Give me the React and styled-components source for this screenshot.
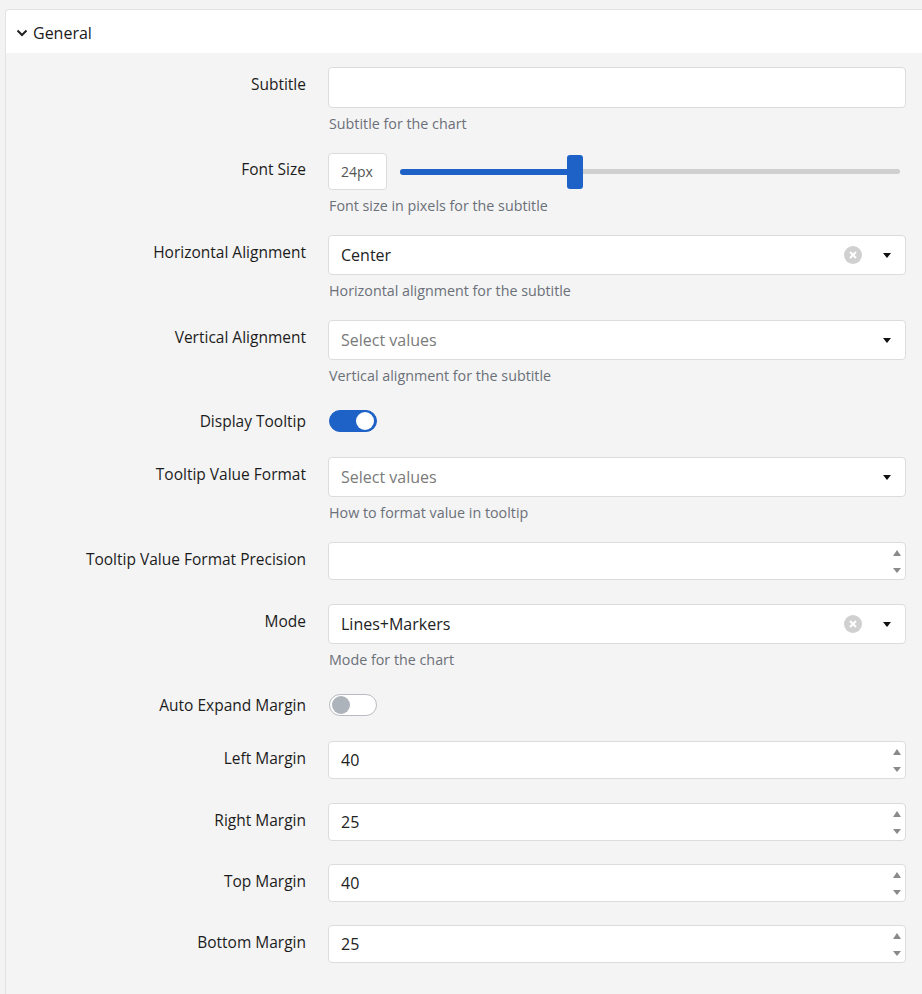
import React from 'react';
import styled, {createGlobalStyle} from 'styled-components';

const Global = createGlobalStyle`
  body {
    margin: 0;
    background: #f3f3f3;
    font-family: "Open Sans", Roboto, Arial, sans-serif;
    color: #222;
  }
`

const Page = styled.div`
  padding: 9px 0 0 5px;
  width: 922px;
  height: 994px;
  box-sizing: border-box;
  overflow: hidden;
`

const Card = styled.div`
  border: 1px solid #e3e3e3;
  border-right: none;
  border-bottom: none;
  border-radius: 4px 0 0 0;
  background: #f4f4f4;
  min-height: 990px;
`

const Header = styled.div`
  display: flex;
  align-items: center;
  gap: 5px;
  height: 43px;
  padding: 3px 0 0 10px;
  box-sizing: border-box;
  background: #fff;
  font-size: 16px;
  color: #1a1a1a;
  border-radius: 4px 0 0 0;
`

const Body = styled.div`
  padding: 14px 16px 0 0;
  display: flex;
  flex-direction: column;
`

const Row = styled.div`
  display: grid;
  grid-template-columns: 300px 1fr;
  column-gap: 22px;
  margin-bottom: ${({ gap }) => gap}px;
`

const Label = styled.div`
  text-align: right;
  font-size: 15.5px;
  line-height: 20px;
  color: #1c1c1c;
  padding-top: ${({ top }) => top ?? 7}px;
`

const Field = styled.div`
  display: flex;
  flex-direction: column;
`

const Help = styled.div`
  font-size: 14.3px;
  line-height: 16px;
  color: #6b7079;
  margin-top: 8px;
  padding-left: 1px;
`

const Box = styled.div`
  position: relative;
  height: ${({ h }) => h || 40}px;
  box-sizing: border-box;
  background: #fff;
  border: 1px solid #dcdcdc;
  border-radius: 4px;
  display: flex;
  align-items: center;
  padding-left: 12px;
  font-size: 16px;
  color: #222;
`

const Placeholder = styled.span`
  color: #7a7a7a;
`

const Spacer = styled.div`
  flex: 1;
`

const Clear = styled.span`
  width: 18px;
  height: 18px;
  flex: none;
  border-radius: 50%;
  background: #d0d0d0;
  display: flex;
  align-items: center;
  justify-content: center;
  margin-right: 21px;
`

const Caret = styled.span`
  width: 0;
  height: 0;
  border-left: 4px solid transparent;
  border-right: 4px solid transparent;
  border-top: 5px solid #111;
  margin-right: 14px;
`

const Spinner = styled.div`
  display: flex;
  flex-direction: column;
  justify-content: space-between;
  height: 100%;
  padding: 7px 4px 6px 0;
  box-sizing: border-box;
`

const Tri = styled.span`
  width: 0;
  height: 0;
  border-left: 4px solid transparent;
  border-right: 4px solid transparent;
  ${({ up }) => up ? 'border-bottom: 6px solid #8a8a8a;' : 'border-top: 5px solid #8a8a8a;'}
`

const SliderRow = styled.div`
  display: flex;
  align-items: center;
  gap: 13px;
`

const SizeBox = styled(Box)`
  width: 59px;
  padding-left: 12px;
  font-size: 14px;
  color: #555;
`

const Track = styled.div`
  position: relative;
  width: 500px;
  height: 5px;
  background: #cfcfcf;
  border-radius: 3px;
`

const Fill = styled.div`
  height: 6px;
  margin-top: -0.5px;
  background: #1f62c7;
  border-radius: 3px;
`

const Thumb = styled.div`
  position: absolute;
  top: -14px;
  width: 16px;
  height: 34px;
  border-radius: 3px;
  background: #1f62c7;
`

const Toggle = styled.div`
  width: 48px;
  height: 22px;
  box-sizing: border-box;
  border-radius: 11px;
  margin: 6px 0 2px 1px;
  display: flex;
  align-items: center;
  padding: 0 2px;
  justify-content: ${({ on }) => on ? 'flex-end' : 'flex-start'};
  background: ${({ on }) => on ? '#1f62c7' : '#fff'};
  border: 1px solid ${({ on }) => on ? '#1f62c7' : '#b8bcc2'};
`

const Knob = styled.span`
  width: 18px;
  height: 18px;
  border-radius: 50%;
  background: ${({ on }) => on ? '#fff' : '#adb3ba'};
`

const Chevron = () => (
  <svg width="12" height="12" viewBox="0 0 12 12">
    <path d="M1.5 3.5 L6 8 L10.5 3.5" fill="none" stroke="#222" strokeWidth="2" />
  </svg>
)

const Select = ({ value, placeholder }) => (
  <Box>
    {value ? <span>{value}</span> : <Placeholder>{placeholder}</Placeholder>}
    <Spacer />
    {value && (
      <Clear>
        <svg width="10" height="10" viewBox="0 0 10 10">
          <path d="M2 2 L8 8 M8 2 L2 8" stroke="#fff" strokeWidth="2" />
        </svg>
      </Clear>
    )}
    <Caret />
  </Box>
)

const NumberInput = ({ value }) => (
  <Box h={38}>
    <span>{value}</span>
    <Spacer />
    <Spinner>
      <Tri up />
      <Tri />
    </Spinner>
  </Box>
)

const Item = ({ label, help, gap, top, children }) => (
  <Row gap={gap}>
    <Label top={top}>{label}</Label>
    <Field>
      {children}
      {help && <Help>{help}</Help>}
    </Field>
  </Row>
)

export default function App() {
  const pct = 0.35
  return (
    <Page>
      <Global />
      <Card>
        <Header><Chevron />General</Header>
        <Body>
          <Item label="Subtitle" help="Subtitle for the chart" gap={21}>
            <Box h={41} />
          </Item>
          <Item label="Font Size" help="Font size in pixels for the subtitle" gap={21} top={6}>
            <SliderRow>
              <SizeBox h={37}>24px</SizeBox>
              <Track>
                <Fill style={{ width: `${pct * 100}%` }} />
                <Thumb style={{ left: `${pct * 500 - 8}px` }} />
              </Track>
            </SliderRow>
          </Item>
          <Item label="Horizontal Alignment" help="Horizontal alignment for the subtitle" gap={21}>
            <Select value="Center" />
          </Item>
          <Item label="Vertical Alignment" help="Vertical alignment for the subtitle" gap={20}>
            <Select placeholder="Select values" />
          </Item>
          <Item label="Display Tooltip" gap={23} top={7}>
            <Toggle on><Knob on /></Toggle>
          </Item>
          <Item label="Tooltip Value Format" help="How to format value in tooltip" gap={21}>
            <Select placeholder="Select values" />
          </Item>
          <Item label="Tooltip Value Format Precision" gap={24}>
            <NumberInput value="" />
          </Item>
          <Item label="Mode" help="Mode for the chart" gap={20}>
            <Select value="Lines+Markers" />
          </Item>
          <Item label="Auto Expand Margin" gap={23} top={7}>
            <Toggle><Knob /></Toggle>
          </Item>
          <Item label="Left Margin" gap={24}>
            <NumberInput value="40" />
          </Item>
          <Item label="Right Margin" gap={23}>
            <NumberInput value="25" />
          </Item>
          <Item label="Top Margin" gap={23}>
            <NumberInput value="40" />
          </Item>
          <Item label="Bottom Margin" gap={23}>
            <NumberInput value="25" />
          </Item>
        </Body>
      </Card>
    </Page>
  )
}
